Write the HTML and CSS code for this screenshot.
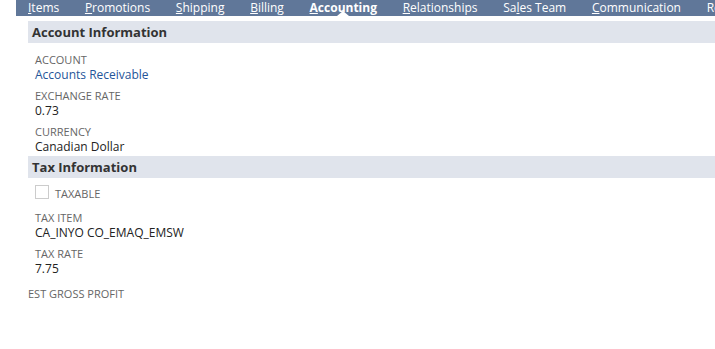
FILE: index.html
```html
<!DOCTYPE html>
<html lang="en">
<head>
    <meta charset="UTF-8">
    <title>Accounting</title>
    <link rel="stylesheet" href="styles.css">
</head>
<body>
    <div class="tabs">
        <span class="tab"><u>I</u>tems</span>
        <span class="tab"><u>P</u>romotions</span>
        <span class="tab"><u>S</u>hipping</span>
        <span class="tab"><u>B</u>illing</span>
        <span class="tab active"><u>A</u>ccounting</span>
        <span class="tab"><u>R</u>elationships</span>
        <span class="tab">Sa<u>l</u>es Team</span>
        <span class="tab"><u>C</u>ommunication</span>
        <span class="tab">Re</span>
    </div>

    <div class="content">
        <div class="section-head">Account Information</div>
        <div class="fields">
            <div class="field">
                <div class="label">ACCOUNT</div>
                <div class="value link">Accounts Receivable</div>
            </div>
            <div class="field">
                <div class="label">EXCHANGE RATE</div>
                <div class="value">0.73</div>
            </div>
            <div class="field">
                <div class="label">CURRENCY</div>
                <div class="value">Canadian Dollar</div>
            </div>
        </div>

        <div class="section-head">Tax Information</div>
        <div class="fields tax">
            <div class="check-row">
                <span class="checkbox"></span>
                <span class="label">TAXABLE</span>
            </div>
            <div class="field">
                <div class="label">TAX ITEM</div>
                <div class="value">CA_INYO CO_EMAQ_EMSW</div>
            </div>
            <div class="field">
                <div class="label">TAX RATE</div>
                <div class="value">7.75</div>
            </div>
        </div>
        <div class="label gross">EST GROSS PROFIT</div>
    </div>
</body>
</html>
```

FILE: styles.css
```css
body {
    font-family: 'Open Sans', Arial, sans-serif;
    margin: 0;
    padding: 0;
    background: #fff;
    color: #222;
}
.tabs {
    margin-left: 16px;
    height: 16px;
    background-color: #607799;
    display: flex;
    align-items: flex-start;
    white-space: nowrap;
    overflow: hidden;
    padding-left: 12px;
    gap: 25.7px;
}
.tab {
    position: relative;
    color: #fff;
    font-size: 12px;
    line-height: 16px;
    height: 16px;
}
.tab.active {
    font-weight: bold;
}
.tab.active::after {
    content: "";
    position: absolute;
    left: 50%;
    bottom: 0;
    margin-left: -6px;
    border-left: 6px solid transparent;
    border-right: 6px solid transparent;
    border-bottom: 5px solid #fff;
}
.content {
    padding-left: 28px;
    padding-top: 5px;
}
.section-head {
    background-color: #e0e4ec;
    height: 22px;
    line-height: 22px;
    padding-left: 4px;
    font-size: 13px;
    font-weight: bold;
    color: #333;
}
.fields {
    padding: 10px 0 0 7px;
}
.fields.tax {
    padding-top: 7px;
}
.field {
    margin-bottom: 7px;
}
.field:last-child {
    margin-bottom: 2px;
}
.fields.tax .field:last-child {
    margin-bottom: 0;
}
.label {
    font-size: 11px;
    line-height: 14px;
    color: #666;
}
.value {
    font-size: 12px;
    line-height: 15px;
    color: #222;
}
.value.link {
    color: #255599;
}
.check-row {
    display: flex;
    align-items: flex-start;
    gap: 6px;
    margin-bottom: 10px;
}
.checkbox {
    display: inline-block;
    width: 12px;
    height: 12px;
    border: 1px solid #ccc;
    background: #fff;
}
.check-row .label {
    margin-top: 2px;
}
.gross {
    margin-top: 11px;
}
```
